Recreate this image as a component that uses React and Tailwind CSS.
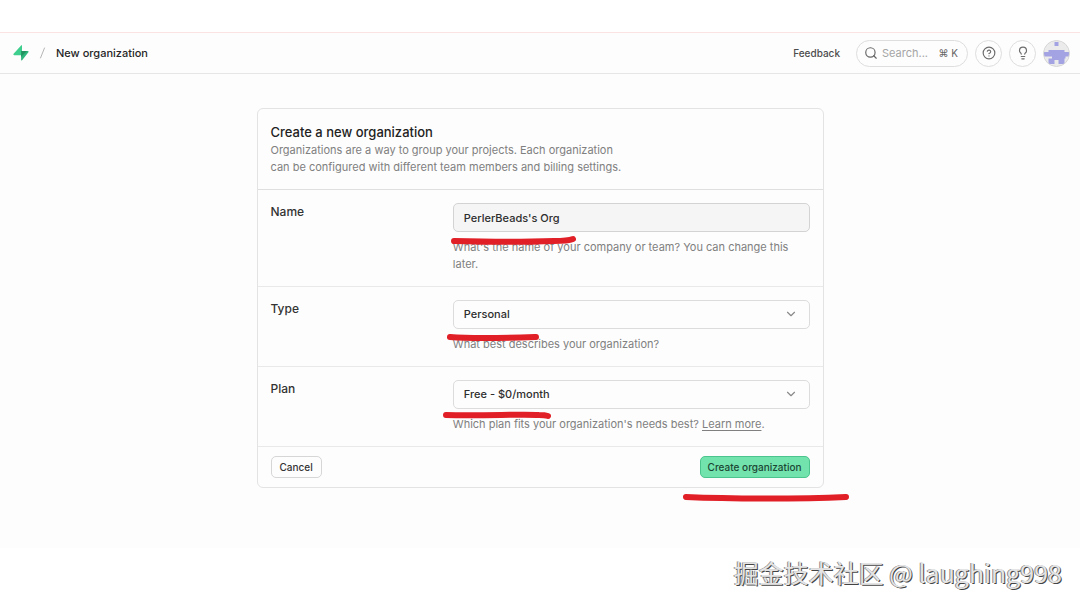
import { ChevronDown, CircleHelp, Lightbulb, Search } from 'lucide-react';

const TYPES = ['Personal', 'Educational', 'Startup', 'Agency', 'Company'];
const PLANS = ['Free - $0/month', 'Pro - $25/month', 'Team - $599/month'];

function Logo() {
    return (
        <svg viewBox="0 0 16 16" className="h-4 w-4" aria-hidden="true">
            <path d="M8.9.7v5.2h5.9c.7 0 1.1.8.6 1.4L8.9 15.4c-.3.3-.8.1-.8-.3V.7z" fill="#2fb67c" />
            <path d="M8.1 15.3v-5.1H1.2c-.7 0-1.1-.8-.6-1.4L8.1.5c.3-.3.8-.1.8.3v5.1h5.3L8.1 12z" fill="#3ecf8e" />
            <path d="M8.1 5.9h6.1L8.1 12z" fill="#249361" />
        </svg>
    );
}

function Avatar() {
    return (
        <svg viewBox="0 0 27 27" className="h-[27px] w-[27px] rounded-full" aria-hidden="true">
            <circle cx="13.5" cy="13.5" r="13.5" fill="#ebebeb" />
            <path
                d="M11.5 2h4v4h-4zM5.5 10h16v2H26v4.5h-3.5v2h-1V24h-6v-4h-4v4h-6v-5.500H9v-2H1V12h4.500z"
                fill="#a3a2e3"
            />
            <circle cx="13.5" cy="13.5" r="13" fill="none" stroke="#d6d6d6" />
        </svg>
    );
}

function Marker({ d, className }) {
    return (
        <svg
            viewBox="0 0 170 12"
            className={'pointer-events-none absolute h-3 w-[170px] ' + className}
            aria-hidden="true"
        >
            <path d={d} fill="none" stroke="#e11f26" strokeWidth="6" strokeLinecap="round" strokeLinejoin="round" />
        </svg>
    );
}

function Field({ id, label, help, children }) {
    return (
        <div className="grid grid-cols-3 gap-x-2 border-b border-[#e9e9e9] p-[13px]">
            <label htmlFor={id} className="text-xs leading-[18px] font-medium text-[#333333]">
                {label}
            </label>
            <div className="relative col-span-2">
                {children}
                <p className="mt-[7px] text-[11px] leading-[17px] text-[#808080]">{help}</p>
            </div>
        </div>
    );
}

function SelectBox({ id, options }) {
    return (
        <div className="relative">
            <select
                id={id}
                className="block h-[29px] w-full appearance-none rounded-[5px] border border-[#dcdcdc] bg-[#fdfdfd] px-2.5 text-[11px] font-medium text-[#2e2e2e]"
            >
                {options.map((option) => (
                    <option key={option}>{option}</option>
                ))}
            </select>
            <ChevronDown
                className="pointer-events-none absolute top-[7px] right-3 h-3.5 w-3.5 text-[#8a8a8a]"
                strokeWidth={2}
            />
        </div>
    );
}

function TopBar() {
    return (
        <header className="flex h-[42px] items-center justify-between border-t border-b border-t-[#fbe3e3] border-b-[#e6e6e6] bg-[#fdfdfd] pr-2.5 pl-[13px]">
            <div className="flex items-center gap-2.5">
                <a href="#" aria-label="Home">
                    <Logo />
                </a>
                <svg viewBox="0 0 7 12" className="h-3 w-[7px]" aria-hidden="true">
                    <path d="M5.5 1l-4 10" stroke="#b5b5b5" strokeLinecap="round" />
                </svg>
                <h1 className="text-[11px] font-medium text-[#262626]">New organization</h1>
            </div>
            <div className="flex items-center gap-[7px]">
                <button type="button" className="mr-[9px] text-[10px] font-medium text-[#4c4c4c]">
                    Feedback
                </button>
                <label className="flex h-[27px] w-28 items-center rounded-full border border-[#dedede] px-[7px]">
                    <Search className="h-3.5 w-3.5 shrink-0 text-[#666666]" strokeWidth={2} />
                    <input
                        type="text"
                        placeholder="Search..."
                        aria-label="Search"
                        className="ml-1 min-w-0 flex-1 text-[11px] outline-none placeholder:text-[#a5a5a5]"
                    />
                    <kbd className="mr-0.5 font-[Inter,sans-serif] text-[10px] text-[#666666]">⌘ K</kbd>
                </label>
                <button
                    type="button"
                    aria-label="Help"
                    className="flex h-[27px] w-[27px] items-center justify-center rounded-full border border-[#dedede] text-[#6c6c6c]"
                >
                    <CircleHelp className="h-3.5 w-3.5" strokeWidth={2} />
                </button>
                <button
                    type="button"
                    aria-label="Advisor"
                    className="flex h-[27px] w-[27px] items-center justify-center rounded-full border border-[#dedede] text-[#6c6c6c]"
                >
                    <Lightbulb className="h-3.5 w-3.5" strokeWidth={2} />
                </button>
                <button type="button" aria-label="Account">
                    <Avatar />
                </button>
            </div>
        </header>
    );
}

export default function App() {
    return (
        <div className="flex min-h-screen flex-col bg-white pt-8 font-[Inter,sans-serif]">
            <TopBar />

            <main className="grow bg-[#fdfdfd] px-4 pt-[34px] pb-[60px]">
                <form
                    className="relative mx-auto max-w-[567px] rounded-md border border-[#e3e3e3]"
                    onSubmit={(e) => e.preventDefault()}
                >
                    <div className="border-b border-[#dfdfdf] p-[13px]">
                        <h2 className="text-[13px] leading-5 font-medium text-[#222222]">
                            Create a new organization
                        </h2>
                        <p className="max-w-[360px] text-[11px] leading-[17px] text-[#808080]">
                            Organizations are a way to group your projects. Each organization can be
                            configured with different team members and billing settings.
                        </p>
                    </div>

                    <Field
                        id="name"
                        label="Name"
                        help="What's the name of your company or team? You can change this later."
                    >
                        <input
                            id="name"
                            type="text"
                            defaultValue="PerlerBeads's Org"
                            className="block h-[29px] w-full rounded-[5px] border border-[#d3d3d3] bg-[#f5f5f5] px-2.5 text-[11px] font-medium text-[#2e2e2e]"
                        />
                        <Marker className="top-8 -left-1" d="M5 6C40 7 80 7 105 6Q119 6 124 4" />
                    </Field>

                    <Field id="type" label="Type" help="What best describes your organization?">
                        <SelectBox id="type" options={TYPES} />
                        <Marker className="top-8 -left-2" d="M5 5C30 7 60 6 91 5" />
                    </Field>

                    <Field
                        id="plan"
                        label="Plan"
                        help={
                            <>
                                Which plan fits your organization's needs best?{' '}
                                <a href="#" className="underline underline-offset-2">
                                    Learn more
                                </a>
                                .
                            </>
                        }
                    >
                        <SelectBox id="plan" options={PLANS} />
                        <Marker className="top-[30px] -left-3" d="M5 5C40 6 80 4 98 5Q104 5 107 6" />
                    </Field>

                    <div className="flex items-center justify-between px-[13px] py-[9px]">
                        <button
                            type="button"
                            className="h-[22px] rounded-[5px] border border-[#d6d6d6] px-2 text-[10px] font-medium text-[#333333]"
                        >
                            Cancel
                        </button>
                        <button
                            type="submit"
                            className="h-[22px] rounded-[5px] border border-[#4cc48d] bg-[#72e3ad] px-[7px] text-[10px] font-medium text-[#1c4634]"
                        >
                            Create organization
                        </button>
                    </div>
                    <Marker className="-right-7 -bottom-4" d="M5 6C50 8 120 8 165 6" />
                </form>
            </main>

            <footer className="flex h-[60px] items-start justify-end pt-2 pr-[18px]">
                <p className="font-['Noto_Sans_CJK_SC',sans-serif] text-[25px] leading-8 whitespace-nowrap text-[#e4e4e4] [text-shadow:-1px_0_0_#8a8a8a,1px_1px_0_#444444]">
                    掘金技术社区 @ laughing998
                </p>
            </footer>
        </div>
    );
}
